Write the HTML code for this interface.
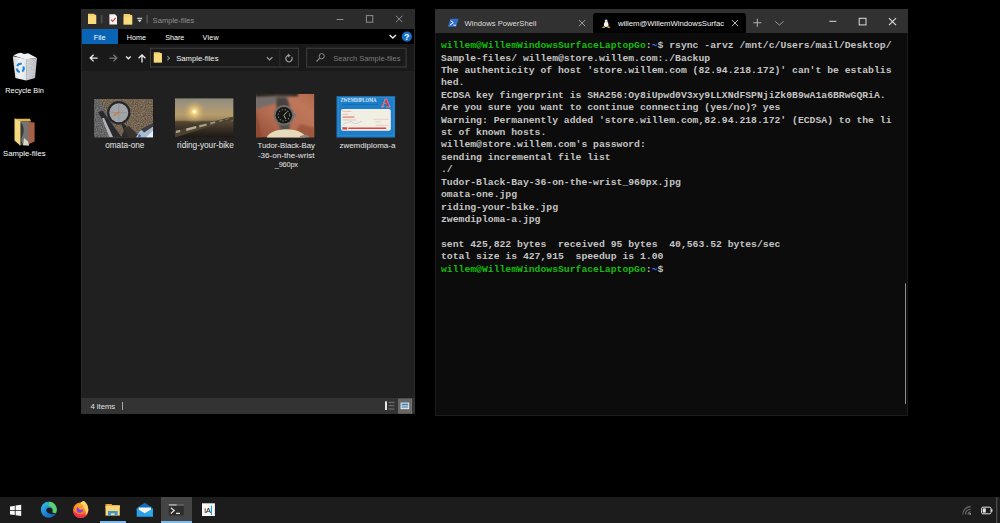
<!DOCTYPE html>
<html lang="en">
<head>
<meta charset="utf-8">
<title>Desktop - rsync backup</title>
<style>
*{box-sizing:border-box;margin:0;padding:0}
html,body{width:1000px;height:523px;overflow:hidden;background:#000}
body{font-family:"Liberation Sans",sans-serif;color:#fff;position:relative;-webkit-font-smoothing:antialiased}
.abs{position:absolute}
.t{position:absolute;white-space:pre;line-height:1}
svg{position:absolute;overflow:visible}
/* desktop icons */
.dlabel{position:absolute;white-space:pre;font-size:7.6px;line-height:10px;color:#fff;text-align:center;text-shadow:0 1px 1px #000}
/* explorer */
#ex{position:absolute;left:81px;top:9px;width:334px;height:405px;background:#202020;overflow:hidden}
#ex .title{position:absolute;left:0;top:0;width:100%;height:20px;background:#2b2b2b}
#ex .tabs{position:absolute;left:0;top:20px;width:100%;height:15.2px;background:#000}
#ex .filetab{position:absolute;left:0;top:0;width:37px;height:15.2px;background:#0a64b6}
#ex .addr{position:absolute;left:0;top:35.2px;width:100%;height:27.2px;background:#191919}
#ex .box{position:absolute;border:1px solid #414141;background:#191919}
#ex .edge{position:absolute;left:0;top:20px;width:100%;height:369px;border-left:1px solid #2a2a2a;border-right:1px solid #2a2a2a;pointer-events:none}
#ex .status{position:absolute;left:0;bottom:0;width:100%;height:16px;background:#333}
.flabel{position:absolute;white-space:pre;font-size:8.22px;line-height:9.75px;color:#e6e6e6;text-align:center}
/* terminal */
#tm{position:absolute;left:435px;top:9px;width:473px;height:407px;background:#0c0c0c;overflow:hidden;box-shadow:inset 0 0 0 1px #1c1c1c}
#tm .bar{position:absolute;left:0;top:0;width:100%;height:24px;background:#313131}
#tm .act{position:absolute;left:158px;top:3.5px;width:153px;height:20.5px;background:#020202;border-radius:3px 3px 0 0}
#tm pre{position:absolute;left:6px;top:31.1px;font-family:"Liberation Mono",monospace;font-size:9.76px;line-height:12.42px;color:#c4c4c4;font-weight:bold;letter-spacing:0}
#tm .g{color:#15bb0c}#tm .b{color:#3b78ff}
.tabt{position:absolute;white-space:pre;font-size:7.65px;line-height:10px;color:#e4e4e4}
/* taskbar */
#tb{position:absolute;left:0;top:497px;width:1000px;height:26px;background:#1c1c1c}
</style>
</head>
<body>

<!-- DESKTOP ICONS -->
<div id="desk">

<svg width="40" height="40" viewBox="5 48 40 40" style="left:5px;top:48px">
 <defs>
  <linearGradient id="rb1" x1="0" y1="0" x2="1" y2="0"><stop offset="0" stop-color="#cfd2d6"/><stop offset=".5" stop-color="#eceef0"/><stop offset="1" stop-color="#dfe1e4"/></linearGradient>
  <linearGradient id="rb2" x1="0" y1="0" x2="1" y2="0"><stop offset="0" stop-color="#c9ccd0"/><stop offset="1" stop-color="#aeb2b7"/></linearGradient>
  <filter id="nz2" x="0" y="0" width="100%" height="100%"><feTurbulence type="fractalNoise" baseFrequency="1.1" numOctaves="2" seed="7" result="n"/><feColorMatrix in="n" type="matrix" values="0 0 0 0 1  0 0 0 0 1  0 0 0 0 1  1.5 0 0 0 -0.5"/><feComposite in2="SourceGraphic" operator="in"/></filter>
 </defs>
 <path d="M13.400 55.600l4-2 3.600-.9 3 1.200 4.200-.6 4 2.200 4.600 2.200-10.600 1.800z" fill="#f1f2f3"/>
 <path d="M12.800 56.300l13.400 2.600v21.700l-10.800-2.600z" fill="url(#rb1)"/>
 <path d="M26.200 58.900l10.800-1-2 20.100-8.800 2.600z" fill="url(#rb2)"/>
 <path d="M12.800 56.300l13.400 2.600v21.700l-10.800-2.600zM26.200 58.900l10.800-1-2 20.100-8.800 2.600z" fill="#fff" filter="url(#nz2)" opacity=".55"/>
 <g stroke="#1b84dc" stroke-width="2" fill="none">
  <path d="M17.300 66.200a3.600 3.600 0 0 1 4.400-2.200"/>
  <path d="M23.200 66.600a3.600 3.600 0 0 1-1 4.800"/>
  <path d="M19.800 72a3.600 3.600 0 0 1-2.800-3.600"/>
 </g>
</svg>
<svg width="34" height="34" viewBox="8 114 34 34" style="left:8px;top:114px">
 <path d="M14.500 118.800h15.500l1 2.600-10.900-.5z" fill="#dfb44a"/>
 <path d="M20.100 121l9 .3v24.200l-9-.4z" fill="#77736e"/>
 <path d="M21 122.500c3 3 3.500 9 1.500 13.500s-1 6 1 9l-3.400-.2v-22z" fill="#3a3938"/>
 <path d="M24 138l4 3.500 1.100 4-6-.3z" fill="#d9d5cc"/>
 <path d="M28.900 122l5.700.6v19l-5.700 2.400z" fill="#a95f45"/>
 <path d="M14.500 118.800l5.600 2.100v24.700l-5.600-5.200z" fill="#f5d77c"/>
 <path d="M14.500 118.800l5.600 2.100v24.700" stroke="#fbe9aa" stroke-width=".5" fill="none"/>
</svg>
<div class="dlabel" style="left:-6.400px;top:85.600px;width:62px;font-size:7.3px">Recycle Bin</div>
<div class="dlabel" style="left:-6.700px;top:149.300px;width:62px;font-size:7.72px">Sample-files</div>
</div>

<!-- FILE EXPLORER -->
<div id="ex">
  <div class="title">
<svg width="334" height="20" viewBox="81 9 334 20" style="left:0;top:0">
  <!-- folder 1 -->
  <path d="M88 13.800h5.800l1 1h1.400v9.200h-8.200z" fill="#f5d16c"/>
  <path d="M88 16h8.200v8h-8.200z" fill="#fbe08a" opacity=".6"/>
  <rect x="100.800" y="15" width="1.600" height="8.600" fill="#505050"/>
  <!-- doc with check -->
  <path d="M109.4 14.2h5.6l2 2v8.4h-7.6z" fill="#f4f4f4"/>
  <path d="M111 19.6l1.6 1.8 3-3.6" stroke="#d9432f" stroke-width="1.1" fill="none"/>
  <!-- folder 2 -->
  <path d="M123.600 14h6l1 1h1.600v9.600h-8.600z" fill="#f5d16c"/>
  <path d="M123.600 16.400h8.600v8.200h-8.600z" fill="#fbe08a" opacity=".6"/>
  <!-- dropdown -->
  <rect x="137.200" y="17.800" width="5" height="1" fill="#e4e4e4"/>
  <path d="M137.600 19.800h4.200l-2.100 2.500z" fill="#e4e4e4"/>
  <rect x="146.400" y="15" width="1.600" height="8.600" fill="#505050"/>
  <!-- window controls -->
  <rect x="336.6" y="19" width="6.8" height="1" fill="#8e8e8e"/>
  <rect x="366.4" y="15.6" width="6.4" height="6.6" fill="none" stroke="#8e8e8e" stroke-width="1"/>
  <path d="M396 15.8l6.4 6.4M402.4 15.8l-6.4 6.4" stroke="#8e8e8e" stroke-width="1" fill="none"/>
</svg>
<div class="t" style="left:71.6px;top:7.6px;font-size:7.6px;color:#8f8f8f">Sample-files</div>
</div>
  <div class="tabs"><div class="filetab"></div>
<div class="t" style="left:12.8px;top:4.6px;font-size:7.2px;color:#fff">File</div>
<div class="t" style="left:45.8px;top:4.6px;font-size:7.2px;color:#fff">Home</div>
<div class="t" style="left:84.2px;top:4.6px;font-size:7.2px;color:#fff">Share</div>
<div class="t" style="left:121.6px;top:4.6px;font-size:7.2px;color:#fff;letter-spacing:.25px">View</div>
<svg width="334" height="16" viewBox="81 29 334 16" style="left:0;top:0">
  <path d="M389.600 34.900l3.200 3.200 3.200-3.200" stroke="#e8e8e8" stroke-width="1.400" fill="none"/>
  <circle cx="406.900" cy="36.600" r="5.100" fill="#1670c9"/>
  <text x="406.900" y="39.700" font-size="8.400" font-weight="bold" fill="#fff" text-anchor="middle" font-family="Liberation Sans, sans-serif">?</text>
</svg>
</div>
  <div class="addr">
<svg width="334" height="26" viewBox="81 44.2 334 26" style="left:0;top:0">
  <rect x="150.400" y="48.400" width="148" height="18.800" fill="#1a1a1a" stroke="#404040" stroke-width="1"/>
  <path d="M279.800 49v17.600" stroke="#2c2c2c" stroke-width="1"/>
  <rect x="306.700" y="48.400" width="99.400" height="18.800" fill="#1a1a1a" stroke="#404040" stroke-width="1"/>
  <!-- back -->
  <path d="M97.6 58.3h-7M93.6 55l-3.4 3.3 3.4 3.3" stroke="#f0f0f0" stroke-width="1.3" fill="none"/>
  <!-- forward -->
  <path d="M109.4 58.3h7M113.4 55l3.4 3.3-3.4 3.3" stroke="#777" stroke-width="1.3" fill="none"/>
  <!-- small chevron -->
  <path d="M126.100 56.600l2.300 2.300 2.300-2.300" stroke="#e6e6e6" stroke-width="1.400" fill="none"/>
  <!-- up -->
  <path d="M142 62.6v-7.4M138.6 58.4l3.4-3.4 3.4 3.4" stroke="#f0f0f0" stroke-width="1.3" fill="none"/>
  <!-- folder -->
  <path d="M153.8 52.4h5.6l.9.9h1.6v9.4h-8.1z" fill="#f7d36b"/>
  <path d="M153.8 54.6h8.1v8.1h-8.1z" fill="#fbe08a" opacity=".6"/>
  <path d="M167.4 56.400l2 2-2 2" stroke="#8c8c8c" stroke-width="1.200" fill="none"/>
  <!-- dropdown chevron -->
  <path d="M266.8 57.4l2.8 2.8 2.8-2.8" stroke="#a8a8a8" stroke-width="1.1" fill="none"/>
  <!-- refresh -->
  <path d="M291.600 57a3.200 3.200 0 1 1-2.600-1.400" stroke="#9c9c9c" stroke-width="1.200" fill="none"/>
  <path d="M287.800 53.800l2.800 1.800-2.400 2z" fill="#9c9c9c"/>
  <!-- magnifier -->
  <circle cx="321.700" cy="56.400" r="2.600" stroke="#8a8a8a" stroke-width="1" fill="none"/>
  <path d="M319.800 58.400l-3.300 3.300" stroke="#8a8a8a" stroke-width="1.100"/>
</svg>
<div class="t" style="left:95.2px;top:10.4px;font-size:7.7px;color:#f2f2f2">Sample-files</div>
<div class="t" style="left:252.3px;top:10.4px;font-size:7.5px;color:#7c7c7c">Search Sample-files</div>
</div>
  
<svg width="334" height="120" viewBox="81 80 334 120" style="left:0;top:71px">
 <defs>
  <filter id="nz" x="0" y="0" width="100%" height="100%"><feTurbulence type="fractalNoise" baseFrequency="0.9" numOctaves="2" seed="4" result="n"/><feColorMatrix in="n" type="matrix" values="0 0 0 0 0  0 0 0 0 0  0 0 0 0 0  1.6 0 0 0 -0.55"/><feComposite in2="SourceGraphic" operator="in"/><feGaussianBlur stdDeviation="0.35"/></filter>
  <filter id="bl" x="-5%" y="-5%" width="110%" height="110%"><feGaussianBlur stdDeviation="0.45"/></filter>
  <filter id="bl2" x="-5%" y="-5%" width="110%" height="110%"><feGaussianBlur stdDeviation="0.8"/></filter>
  <linearGradient id="g2" x1="0" y1="0" x2="0" y2="1"><stop offset="0" stop-color="#8e8b7c"/><stop offset=".22" stop-color="#a4967a"/><stop offset=".42" stop-color="#b79c6c"/><stop offset=".56" stop-color="#9a835c"/><stop offset=".6" stop-color="#55472f"/><stop offset=".72" stop-color="#42372a"/><stop offset="1" stop-color="#1b1712"/></linearGradient>
  <radialGradient id="sun" cx=".5" cy=".5" r=".5"><stop offset="0" stop-color="#fff3b8"/><stop offset=".22" stop-color="#f6d57c" stop-opacity=".95"/><stop offset=".6" stop-color="#d9b673" stop-opacity=".45"/><stop offset="1" stop-color="#b79c6c" stop-opacity="0"/></radialGradient>
  <linearGradient id="g3" x1="0" y1="1" x2="1" y2="0"><stop offset="0" stop-color="#94503a"/><stop offset=".4" stop-color="#b56c52"/><stop offset=".75" stop-color="#bf7759"/><stop offset="1" stop-color="#b0694d"/></linearGradient>
  <clipPath id="c1"><rect x="94.2" y="99" width="58.9" height="38.5"/></clipPath>
  <clipPath id="c2"><rect x="175" y="98.2" width="58.6" height="39.2"/></clipPath>
  <clipPath id="c3"><rect x="256" y="93.8" width="58.4" height="43.7"/></clipPath>
 </defs>
 <!-- thumb 1: omata-one -->
 <g clip-path="url(#c1)">
  <rect x="94.2" y="99" width="58.9" height="38.5" fill="#86745e"/>
  <rect x="94.2" y="99" width="58.9" height="38.5" fill="#c9b79a" filter="url(#nz)" opacity=".5"/>
  <path d="M94.2 99h5l21.500 38.500h-26.500z" fill="#747475"/>
  <path d="M94.2 99h5l21.500 38.500h-26.500z" fill="#b98a5a" filter="url(#nz)" opacity=".5"/>
  <g filter="url(#bl)">
  <path d="M98.200 112.200l4.200-1.600 19.500 27h-9.500z" fill="#2b2b2d"/>
  <path d="M102 118.500l2-.8 9 19.300h-3.600z" fill="#b4b4b8"/>
  <circle cx="118.800" cy="112.700" r="11.700" fill="#26272a"/>
  <circle cx="118.800" cy="112.700" r="9.500" fill="#a2a5a8"/>
  <path d="M118.800 104v17.500M110.500 112.700h16.500" stroke="#8b8e92" stroke-width=".8"/>
  <path d="M113.700 115.600l5.400-3.800" stroke="#e0762a" stroke-width="1.400"/>
  <path d="M120.800 122.800l4.600 2 4 8.700 6.300 4h-14.700l3-7z" fill="#2a2a2c"/>
  <path d="M124 128l5-2 8 8 4 3.500h-12z" fill="#38332e"/>
  <path d="M135.700 137.500l4-6 6-4 7.400-3.700v13.700z" fill="#a9bdd2"/>
  <path d="M141 129l9-4.500 3.100-1.200v3.200l-9 6z" fill="#3a3d44"/>
  <path d="M146 137.500l7.100-7v7z" fill="#e6eef6"/>
  <path d="M139 134l2 1.500-1 2h-2z" fill="#2f64c2"/>
  </g>
 </g>
 <!-- thumb 2: riding-your-bike -->
 <g clip-path="url(#c2)">
  <rect x="175" y="98.2" width="58.600" height="39.200" fill="url(#g2)"/>
  <circle cx="194.400" cy="111.700" r="12" fill="url(#sun)"/>
  <circle cx="194.400" cy="111.700" r="1.600" fill="#fffbe0"/>
  <g filter="url(#bl)">
  <path d="M175 131l8-2 46-11.500 4.600-.8v3.300l-20 5.500-38.600 12z" fill="#4c4233"/>
  <path d="M176 130.800l4-1.100.4 2.300-4.400 1.200z" fill="#a89e86"/>
  <path d="M186 128.400l10-2.500.5 2.300-10 2.700z" fill="#b8ae96"/>
  <path d="M199 125.300l7.500-1.900.4 2-7.500 2.100z" fill="#a89e86"/>
  <path d="M210 122.600l5-1.300.4 1.800-5 1.400z" fill="#9d937c"/>
  <path d="M219 120.400l3.600-.9.300 1.500-3.600 1z" fill="#857c68"/>
  <path d="M225 118.900l4-.9.200 1.200-4 1z" fill="#756c5a"/>
  </g>
 </g>
 <!-- thumb 3: Tudor watch on wrist -->
 <g clip-path="url(#c3)">
  <rect x="256" y="93.800" width="58.400" height="43.700" fill="url(#g3)"/>
  <g filter="url(#bl2)">
  <path d="M255 93h42.500l-1 3.200-10 1.200-10 5.800-21.500 6.500z" fill="#746e68"/>
  <path d="M255 93h43v3.300l-22-.3-21 1z" fill="#241c18"/>
  <path d="M256 110l6 27.500h-7z" fill="#8f4a33"/>
  <path d="M300 124l15 4v10h-22z" fill="#99523a" opacity=".8"/>
  <path d="M276.300 97.500l10.500.3 3.200 9-13.500 2z" fill="#47433f"/>
  <path d="M279 123l11 .5-1 8.200-8.400.3z" fill="#54514d"/>
  </g>
  <g filter="url(#bl)">
  <circle cx="283.900" cy="115.300" r="10.300" fill="#6d6d6a"/>
  <circle cx="283.900" cy="115.300" r="8.300" fill="#191715"/>
  <circle cx="283.900" cy="115.300" r="5.700" fill="none" stroke="#8f8a78" stroke-width="1.100" stroke-dasharray="1.100 1.900"/>
  <path d="M283.900 115.300l3.200-3.600M283.900 115.300l1.800 3.600" stroke="#c9c6b8" stroke-width=".8"/>
  <rect x="293.800" y="113.600" width="2.400" height="3.200" fill="#77777a"/>
  <ellipse cx="286.300" cy="138.300" rx="19.500" ry="9" fill="#e5dab9"/>
  <path d="M300 136l6-1.500 4 3h-10z" fill="#8b8680"/>
  </g>
 </g>
 <!-- thumb 4: zwemdiploma -->
 <rect x="336.500" y="96.200" width="58.600" height="41.300" fill="#1c7dc8"/>
 <rect x="338.300" y="97.800" width="55" height="38.100" fill="none" stroke="#4f9ad6" stroke-width=".4"/>
 <rect x="340.900" y="108.900" width="49.900" height="21.800" rx="2" fill="#f1eee4"/>
 <text x="340.400" y="102" font-family="Liberation Serif, serif" font-weight="bold" font-size="6" fill="#dde9f4" textLength="36" lengthAdjust="spacingAndGlyphs">ZWEMDIPLOMA</text>
 <text x="385.500" y="107.100" font-family="Liberation Serif, serif" font-weight="bold" font-size="12.600" fill="#d8232f" text-anchor="middle" stroke="#e9a0a4" stroke-width=".35">A</text>
 <path d="M342.400 104.500h36" stroke="#155f9c" stroke-width=".8" opacity=".7"/>
 <g opacity=".8">
 <path d="M342.400 111.400h9M342.400 114.300h5.500M342.400 119.900h14" stroke="#e29a94" stroke-width=".7"/>
 <path d="M342.400 117.100h12" stroke="#dc6a64" stroke-width="1.300"/>
 <path d="M373.200 119.300h15.400M375.200 121.800h5.500M375.700 125.300h13" stroke="#e7aaa4" stroke-width=".6"/>
 <path d="M342 125.600c3-3.400 5.500-3 8-3.800s3 2.600 6 1.800 3-2 6-2.200" stroke="#9fb0cf" stroke-width=".55" fill="none"/>
 </g>
 <path d="M348.400 128.300h37.800" stroke="#dc3f43" stroke-width="1.500"/>
 <rect x="342.400" y="127.300" width="4.800" height="2.200" fill="#e23b3b"/>
 <rect x="342.400" y="127.300" width="2" height="1" fill="#3f8fd6"/>
</svg>
<div class="flabel" style="left:5.800px;top:131.800px;width:76px">omata-one</div>
<div class="flabel" style="left:86.400px;top:131.800px;width:76px">riding-your-bike</div>
<div class="flabel" style="left:167.200px;top:131.800px;width:76px;font-size:7.740px">Tudor-Black-Bay</div>
<div class="flabel" style="left:167.200px;top:141.550px;width:76px;font-size:8.080px">-36-on-the-wrist</div>
<div class="flabel" style="left:167.300px;top:151.300px;width:76px;font-size:7.400px;letter-spacing:-.2px">_960px</div>
<div class="flabel" style="left:248.400px;top:131.800px;width:76px;font-size:8px">zwemdiploma-a</div>

  <div class="edge"></div>
  <div class="status">
<div class="t" style="left:9.4px;top:5px;font-size:7.7px;color:#e0e0e0">4 items</div>
<div class="abs" style="left:40.7px;top:4.4px;width:1px;height:7.4px;background:#a8a8a8"></div>
<svg width="334" height="16" viewBox="81 398 334 16" style="left:0;top:0">
  <rect x="385" y="401.4" width="2" height="8.6" fill="#e8e8e8"/>
  <path d="M388.4 402.4h6M388.4 405.7h6M388.4 409h6" stroke="#777" stroke-width="1"/>
  <rect x="398" y="398.5" width="13.800" height="15.200" fill="#666"/><rect x="411" y="398.500" width=".8" height="15.200" fill="#7c7c7c"/>
  <rect x="400.6" y="402.6" width="8.6" height="6.6" fill="#f0f0f0"/>
  <rect x="401.5" y="403.6" width="6.8" height="1.6" fill="#2b86d9"/>
  <rect x="401.5" y="405.4" width="6.8" height="2.8" fill="#8fa9b8"/>
</svg>
</div>
</div>

<!-- TERMINAL -->
<div id="tm">
  <div class="bar"><div class="act"></div>
<svg width="473" height="24" viewBox="435 9 473 24" style="left:0;top:0">
  <!-- powershell icon -->
  <path d="M450.400 18.700h8.200l-2.400 8.100h-8.200z" fill="#2f6fd0"/>
  <path d="M450.600 20.500l2.700 2.200-3.500 2.400" stroke="#fff" stroke-width="1" fill="none"/>
  <path d="M453.400 25.200h2.600" stroke="#fff" stroke-width=".9"/>
  <!-- tab1 close -->
  <path d="M579 20l6.200 6.200M585.200 20l-6.200 6.200" stroke="#a8a8a8" stroke-width=".9"/>
  <!-- tux -->
  <path d="M606.200 18.600c1.400 0 1.900 1.100 1.900 2.400 0 1.400 1.600 2.600 1.900 4.600.2 1.200-.6 1.800-1.400 1.800h-4.800c-.8 0-1.600-.6-1.400-1.800.3-2 1.900-3.200 1.900-4.600 0-1.300.5-2.400 1.900-2.400z" fill="#141414"/>
  <path d="M606.200 19.400c.9 0 1.200.8 1.200 1.700 0 1.300 1.100 2.300 1.100 4 0 1.300-1 1.900-2.300 1.900s-2.300-.6-2.300-1.900c0-1.700 1.100-2.700 1.100-4 0-.9.300-1.700 1.200-1.700z" fill="#f4f4f4"/>
  <path d="M605.300 21.100h1.800l-.9 1z" fill="#e9a820"/>
  <path d="M601.600 27.800l2.600-1.800.9 2zM610.800 27.800l-2.600-1.800-.9 2z" fill="#e9a820"/>
  <!-- tab2 close -->
  <path d="M731.900 20l6.200 6.200M738.100 20l-6.200 6.200" stroke="#d6d6d6" stroke-width=".9"/>
  <!-- plus -->
  <path d="M753.300 22.750h8M757.300 18.750v8" stroke="#b4b4b4" stroke-width="1"/>
  <!-- chevron -->
  <path d="M775.200 21.400l4.200 3.600 4.200-3.600" stroke="#9a9a9a" stroke-width="1" fill="none"/>
  <!-- window controls -->
  <rect x="829.300" y="20.800" width="7" height="1" fill="#dcdcdc"/>
  <rect x="859.200" y="18.300" width="6.800" height="6.600" fill="none" stroke="#dcdcdc" stroke-width="1"/>
  <path d="M889 18.200l7 7M896 18.200l-7 7" stroke="#dcdcdc" stroke-width="1.100"/>
</svg>
<div class="tabt" style="left:29.600px;top:9.700px;color:#dedede">Windows PowerShell</div>
<div class="tabt" style="left:182.900px;top:9.700px;color:#f4f4f4;font-size:7.74px">willem@WillemWindowsSurfac</div>
</div>
<pre><b class="g">willem@WillemWindowsSurfaceLaptopGo</b>:<b class="b">~</b>$ rsync -arvz /mnt/c/Users/mail/Desktop/
Sample-files/ willem@store.willem.com:./Backup
The authenticity of host 'store.willem.com (82.94.218.172)' can't be establis
hed.
ECDSA key fingerprint is SHA256:Oy8iUpwd0V3xy9LLXNdFSPNjiZk0B9wA1a6BRwGQRiA.
Are you sure you want to continue connecting (yes/no)? yes
Warning: Permanently added 'store.willem.com,82.94.218.172' (ECDSA) to the li
st of known hosts.
willem@store.willem.com's password:
sending incremental file list
./
Tudor-Black-Bay-36-on-the-wrist_960px.jpg
omata-one.jpg
riding-your-bike.jpg
zwemdiploma-a.jpg

sent 425,822 bytes  received 95 bytes  40,563.52 bytes/sec
total size is 427,915  speedup is 1.00
<b class="g">willem@WillemWindowsSurfaceLaptopGo</b>:<b class="b">~</b>$</pre>
  <div class="abs" style="left:469.900px;top:274.200px;width:1.500px;height:121px;background:#8e8e8e;border-radius:1px"></div>
</div>

<!-- TASKBAR -->
<div id="tb">
<div class="abs" style="left:161px;top:0;width:31px;height:26px;background:#454545"></div>
<div class="abs" style="left:161px;top:24.400px;width:31px;height:1.600px;background:#79bdf0"></div>
<div class="abs" style="left:99.600px;top:24.400px;width:26px;height:1.600px;background:#79bdf0"></div>
<svg width="1000" height="26" viewBox="0 497 1000 26" style="left:0;top:0">
 <defs>
  <linearGradient id="edg" x1="0" y1="0" x2="1" y2="1"><stop offset="0" stop-color="#35c1f1"/><stop offset=".55" stop-color="#1a7fd4"/><stop offset="1" stop-color="#0c59a4"/></linearGradient>
  <linearGradient id="edg2" x1="0" y1="0" x2="1" y2="0"><stop offset="0" stop-color="#2fc4a0"/><stop offset="1" stop-color="#6fd849"/></linearGradient>
  <radialGradient id="ffx" cx=".45" cy=".35" r=".7"><stop offset="0" stop-color="#ffd53a"/><stop offset=".45" stop-color="#ff8a1f"/><stop offset="1" stop-color="#e3263f"/></radialGradient>
 </defs>
 <!-- windows logo -->
 <path d="M10 506.400l4.800-.7v4.300h-4.800zM15.600 505.600l5.600-.8v5.200h-5.600zM10 510.800h4.800v4.300l-4.800-.7zM15.600 510.800h5.600v5.200l-5.600-.8z" fill="#f5f5f5"/>
 <!-- edge -->
 <circle cx="48.800" cy="509.800" r="8" fill="url(#edg)"/>
 <path d="M49.600 501.850c4.200.4 7.200 3.900 7.200 7.950 0 1.200-.4 2.400-1 3.200-1.400.4-3.200.2-4.600-.6 1.400-1.200 1.800-3 .9-4.500-.8-1.300-2.300-2-3.900-2z" fill="#5fd068"/>
 <path d="M42 505.600c1.400-2.400 4.200-3.900 7.600-3.750l-1.400 4c-2.400-.1-4.600.9-6.200 2.750z" fill="#2bb5c8" opacity=".8"/>
 <path d="M46.600 509c1.200-1.400 3.600-1.600 5-.4 1.200 1 1.300 2.600.6 3.800l3.600.8c-1.600 1.200-4.200 1.200-6.400.4-2.600-.9-3.900-3-2.800-4.600z" fill="#1c1c1c"/>
 <!-- firefox -->
 <circle cx="80.700" cy="510.300" r="7.700" fill="url(#ffx)"/>
 <path d="M73.200 511c0 4 3.400 7.100 7.500 7.100s7.500-3.100 7.500-7.100c-2 2.800-5 4-7.800 3.600-3-.4-5.600-1.800-7.200-3.600z" fill="#e8334a"/>
 <circle cx="79.800" cy="509.600" r="3.300" fill="#8a42d8"/>
 <path d="M76 505.400l2.600-.6 1.600 1.800 3 .6-.6 2.400-2.600.2z" fill="#ff9a25"/>
 <path d="M81.400 502c1.200-1 2.400-1.200 3.200-.4 2.600 2 4 5.400 3.600 8.800-.3 2.200-1.400 3.900-3 5 1-2.200.8-4.600-.6-6.400-1.200-1.600-1.800-3-1.400-4.400-1 .2-1.900-.1-2.600-.8-.3-.6 0-1.300.8-1.800z" fill="#fbd468"/>
 <!-- explorer -->
 <path d="M105.500 504h6l.9 1h7.400v3h-14.300z" fill="#e8a33d"/>
 <rect x="105.500" y="505.800" width="14.300" height="9.800" fill="#f8d775"/>
 <path d="M108 511h9.600v4.600h-3v-2.400h-3.600v2.400h-3z" fill="#3a96dd"/>
 <!-- mail -->
 <path d="M136.700 508l8.100-5.300 8.100 5.300v2h-16.200z" fill="#0f6cbd"/>
 <path d="M138.600 507.400h12.400v5l-6.200 3-6.200-3z" fill="#f7f5ee"/>
 <path d="M136.700 508.600l8.100 4.600 8.100-4.600v8.200h-16.200z" fill="#2aa0ec"/>
 <path d="M144.800 513.200l8.100-4.600v8.200z" fill="#27b4e4" opacity=".55"/>
 <!-- terminal -->
 <rect x="168.800" y="504" width="15" height="11.400" rx=".8" fill="#2d2d2d"/>
 <rect x="168.800" y="504.200" width="8" height="1.500" fill="#b9b9b9"/>
 <rect x="176.800" y="504.200" width="7" height="1.500" fill="#6c6c6c"/>
 <path d="M170.800 507.800l3.400 2.800-3.400 2.800" stroke="#dedede" stroke-width="1.300" fill="none"/>
 <path d="M176 513.400h4" stroke="#dedede" stroke-width="1.300"/>
 <!-- iA -->
 <rect x="202" y="503.300" width="12.900" height="12.700" fill="#f8f8f8"/>
 <text x="204.300" y="513.400" font-family="Liberation Sans, sans-serif" font-size="7.800" fill="#111" letter-spacing="-.3">iA</text>
 <rect x="210.900" y="505.600" width="1.100" height="9.400" fill="#1fa0dc"/>
 <!-- wifi -->
 <g stroke="#6f6f6f" stroke-width="1.100" fill="none">
  <path d="M962.800 514.400a7.800 7.800 0 0 1 7.800-7.800"/>
  <path d="M965.400 514.400a5.200 5.200 0 0 1 5.200-5.200"/>
  <path d="M968 514.400a2.600 2.600 0 0 1 2.600-2.600"/>
 </g>
 <rect x="969.400" y="513.200" width="1.400" height="1.400" fill="#cfcfcf"/>
 <!-- battery -->
 <rect x="981.600" y="507.200" width="9.400" height="6.600" rx="1.200" fill="none" stroke="#e6e6e6" stroke-width="1"/>
 <rect x="991.200" y="509.200" width="1.200" height="2.600" fill="#e6e6e6"/>
 <rect x="982.800" y="508.400" width="3" height="4.200" fill="#e6e6e6"/>
 <rect x="996.400" y="497" width=".8" height="26" fill="#6a6a6a"/>
</svg>
</div>

</body>
</html>
